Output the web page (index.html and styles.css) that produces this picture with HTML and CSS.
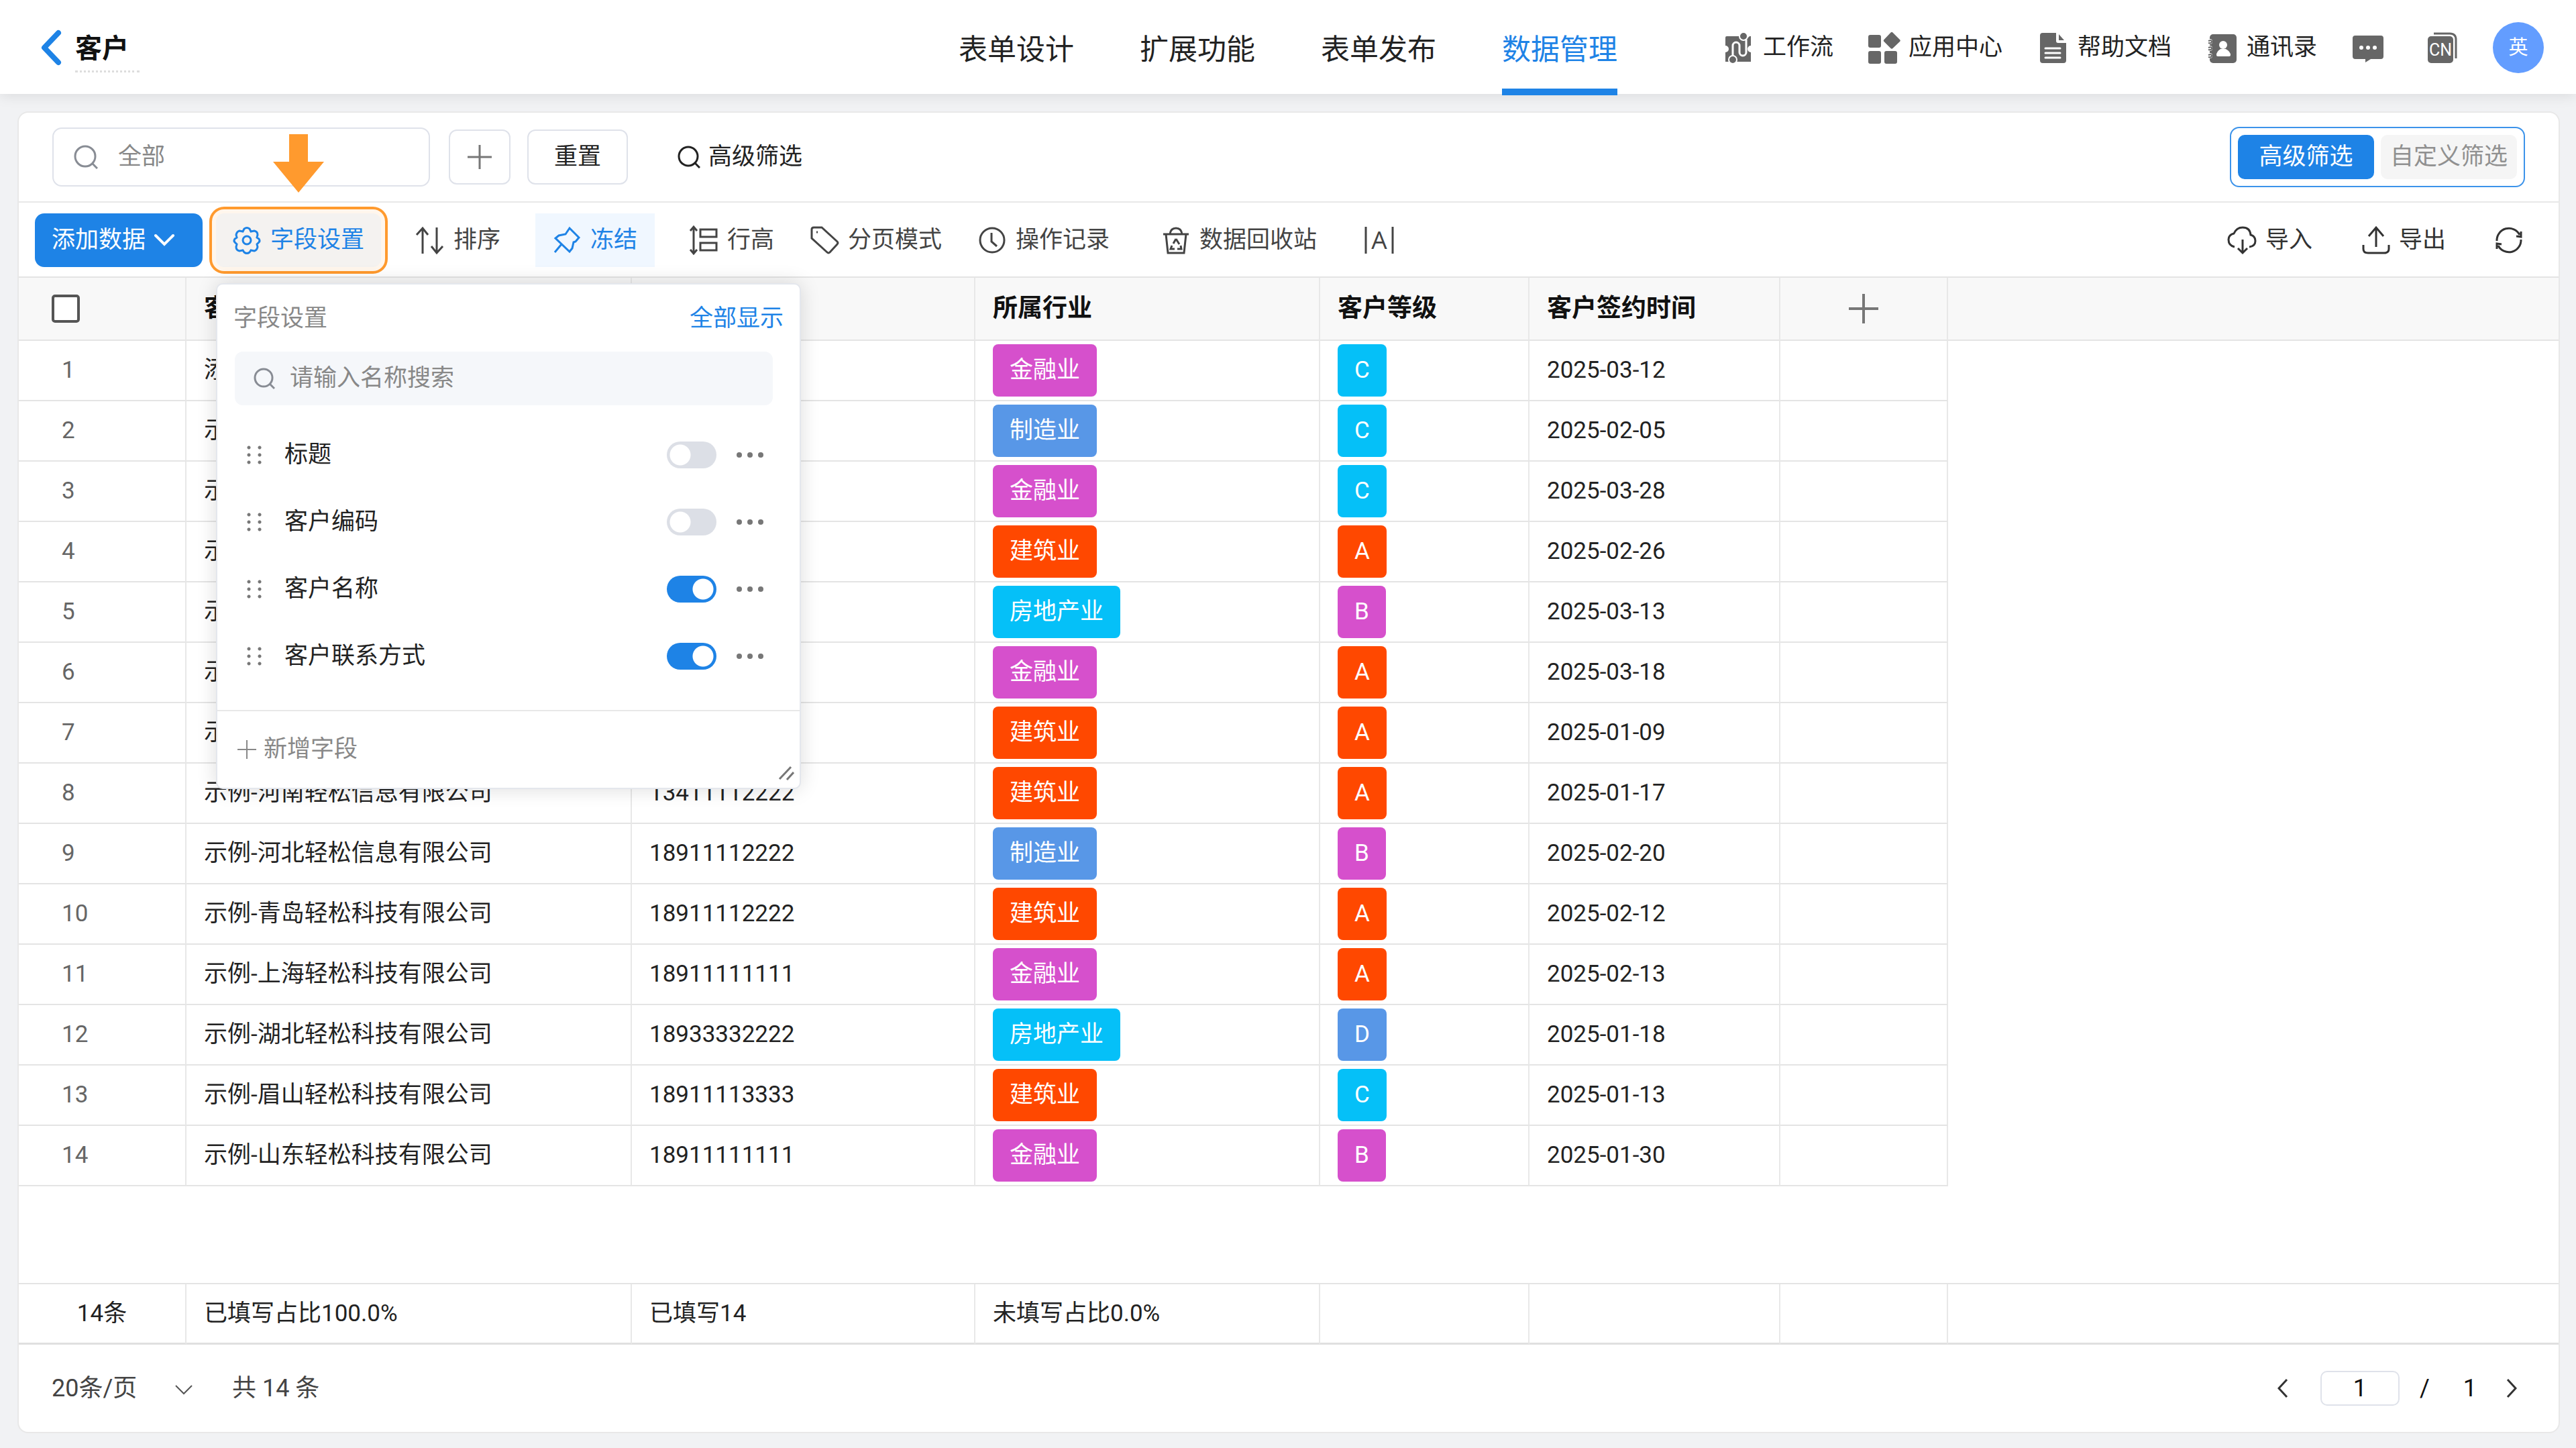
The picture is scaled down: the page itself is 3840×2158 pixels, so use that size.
FILE: index.html
```html
<!DOCTYPE html>
<html lang="zh-CN">
<head>
    <meta charset="UTF-8">
    <meta name="viewport" content="width=device-width, initial-scale=1.0">
    <title>客户</title>
    <link rel="stylesheet" href="styles.css">
</head>
<body>
    <header class="topbar">
        <div class="topbar-left">
            <a class="back" href="#" aria-label="返回">
                <svg width="32" height="56" viewBox="0 0 32 56"><path d="M27 6 6 28l21 22" fill="none" stroke="#1e83e6" stroke-width="8" stroke-linecap="round" stroke-linejoin="round"/></svg>
            </a>
            <h1 class="title">客户</h1>
        </div>
        <nav class="nav">
            <a href="#">表单设计</a>
            <a href="#">扩展功能</a>
            <a href="#">表单发布</a>
            <a href="#" class="active">数据管理</a>
        </nav>
        <div class="topbar-right">
            <a href="#" class="top-link">
                <svg class="top-icon" viewBox="0 0 48 48">
                    <path d="M6 7h24a6 6 0 0 0 10 0h2v14a5 5 0 0 0 0 10v14H20a6 6 0 0 0-9 0H4V31a5 5 0 0 0 0-10V9a2 2 0 0 1 2-2z" fill="#666"/>
                    <path d="M15 38V21a5 5 0 0 1 10 0v10a5 5 0 0 0 10 0V12" fill="none" stroke="#fff" stroke-width="3"/>
                    <circle cx="31" cy="7" r="6" fill="#666" stroke="#fff" stroke-width="2"/>
                    <circle cx="15" cy="42" r="6" fill="#666" stroke="#fff" stroke-width="2"/>
                </svg>
                <span>工作流</span>
            </a>
            <a href="#" class="top-link">
                <svg class="top-icon" viewBox="0 0 48 48" fill="#666">
                    <rect x="0" y="5" width="19" height="19" rx="3"/>
                    <rect x="0" y="29" width="19" height="19" rx="3"/>
                    <rect x="24" y="29" width="19" height="19" rx="3"/>
                    <path d="M33.500 1.500q1.500-1.500 3 0L47 12q1.500 1.500 0 3L36.500 25q-1.500 1.500-3 0L23.500 15q-1.500-1.500 0-3z"/>
                </svg>
                <span>应用中心</span>
            </a>
            <a href="#" class="top-link">
                <svg class="top-icon" viewBox="0 0 48 48">
                    <path d="M8 2h20v12a3 3 0 0 0 3 3h12v26a4 4 0 0 1-4 4H8a4 4 0 0 1-4-4V6a4 4 0 0 1 4-4z" fill="#666"/>
                    <path d="M32 4l8 9h-8z" fill="#666"/>
                    <path d="M12 25h22M12 32h22M12 39h22" stroke="#fff" stroke-width="3" stroke-linecap="round"/>
                </svg>
                <span>帮助文档</span>
            </a>
            <a href="#" class="top-link">
                <svg class="top-icon" viewBox="0 0 48 48">
                    <rect x="5" y="4" width="40" height="43" rx="5" fill="#666"/>
                    <g fill="#fff"><circle cx="5" cy="15" r="4"/><circle cx="5" cy="25" r="4"/><circle cx="5" cy="36" r="4"/></g>
                    <path d="M3 14q5-2 5 1t-5 2M3 24q5-2 5 1t-5 2M3 35q5-2 5 1t-5 2" fill="none" stroke="#666" stroke-width="2"/>
                    <circle cx="25" cy="20" r="6" fill="#fff"/>
                    <path d="M21 26h8q7 4 7 9 0 2-2 2H17q-2 0-2-2 0-5 6-9z" fill="#fff"/>
                </svg>
                <span>通讯录</span>
            </a>
            <button class="icon-btn message-btn" aria-label="消息">
                <svg class="top-icon" viewBox="0 0 48 48">
                    <path d="M5 6h38a4 4 0 0 1 4 4v27a4 4 0 0 1-4 4H28l-8 5v-5H5a4 4 0 0 1-4-4V10a4 4 0 0 1 4-4z" fill="#666"/>
                    <g fill="#fff"><circle cx="14" cy="24" r="3"/><circle cx="24" cy="24" r="3"/><circle cx="34" cy="24" r="3"/></g>
                </svg>
            </button>
            <button class="icon-btn" aria-label="语言">
                <svg class="top-icon" viewBox="0 0 48 48">
                    <path d="M12 3h24q9 0 9 9v28" fill="none" stroke="#666" stroke-width="3"/>
                    <rect x="3" y="7" width="38" height="40" rx="5" fill="#666"/>
                    <text x="22" y="36" font-size="25" text-anchor="middle" fill="#fff" class="lang-code">CN</text>
                </svg>
            </button>
            <button class="avatar">英</button>
        </div>
    </header>

    <main class="panel">
        <div class="filter-bar">
            <label class="search">
                <svg width="36" height="36" viewBox="0 0 36 36" fill="none" stroke="#888c94" stroke-width="3"><circle cx="17" cy="17" r="15"/><path d="M27 27l8 8"/></svg>
                <input type="text" placeholder="全部" aria-label="搜索">
            </label>
            <button class="outline-btn plus-btn" aria-label="添加条件">
                <svg width="36" height="36" viewBox="0 0 36 36" stroke="#777" stroke-width="3"><path d="M18 0v36M0 18h36"/></svg>
            </button>
            <button class="outline-btn reset-btn">重置</button>
            <button class="advanced-btn">
                <svg width="34" height="34" viewBox="0 0 34 34" fill="none" stroke="#222" stroke-width="3"><circle cx="16" cy="16" r="14"/><path d="M25 25l8 8"/></svg>
                高级筛选
            </button>
            <div class="filter-switch">
                <button class="active">高级筛选</button>
                <button>自定义筛选</button>
            </div>
        </div>

        <div class="toolbar">
            <button class="add-btn">
                添加数据
                <svg width="32" height="20" viewBox="0 0 32 20"><path d="M3 3l13 13L29 3" fill="none" stroke="#fff" stroke-width="4" stroke-linecap="round"/></svg>
            </button>
            <div class="field-wrap">
                <button class="tool field-btn">
                    <svg class="tool-icon" viewBox="0 0 42 42">
                        <path d="M17 4q4-3 8 0l2 4 5-1q5 1 5 6l-1 4 3 2q2 3 0 5l-3 3 1 4q-1 5-5 6l-5-1-2 3q-4 3-8 0l-2-3-5 1q-5-1-5-6l1-4-3-3q-2-2 0-5l3-2-1-4q1-5 5-6l5 1z"/>
                        <circle cx="21" cy="21" r="6"/>
                    </svg>
                    字段设置
                </button>
                <svg class="arrow" width="76" height="87" viewBox="0 0 76 87"><path d="M24 0h28v41h24L38 87 0 41h24z" fill="#ff9a2e"/></svg>

                <section class="popup">
                    <div class="popup-head">
                        <span>字段设置</span>
                        <a href="#">全部显示</a>
                    </div>
                    <label class="popup-search">
                        <svg width="32" height="34" viewBox="0 0 32 34" fill="none" stroke="#888c94" stroke-width="3"><circle cx="15" cy="16" r="13"/><path d="M24 25l7 7"/></svg>
                        <input type="text" placeholder="请输入名称搜索" aria-label="名称搜索">
                    </label>
                    <ul class="field-list">
                        <li>
                            <span class="drag"></span>
                            <label for="f1">标题</label>
                            <input class="switch" type="checkbox" id="f1">
                            <button class="more" aria-label="更多"><i></i><i></i><i></i></button>
                        </li>
                        <li>
                            <span class="drag"></span>
                            <label for="f2">客户编码</label>
                            <input class="switch" type="checkbox" id="f2">
                            <button class="more" aria-label="更多"><i></i><i></i><i></i></button>
                        </li>
                        <li>
                            <span class="drag"></span>
                            <label for="f3">客户名称</label>
                            <input class="switch" type="checkbox" id="f3" checked>
                            <button class="more" aria-label="更多"><i></i><i></i><i></i></button>
                        </li>
                        <li>
                            <span class="drag"></span>
                            <label for="f4">客户联系方式</label>
                            <input class="switch" type="checkbox" id="f4" checked>
                            <button class="more" aria-label="更多"><i></i><i></i><i></i></button>
                        </li>
                    </ul>
                    <div class="popup-foot">
                        <button class="new-field">
                            <svg width="28" height="28" viewBox="0 0 28 28" stroke="#888" stroke-width="2"><path d="M14 0v28M0 14h28"/></svg>
                            新增字段
                        </button>
                    </div>
                    <svg class="resize" width="24" height="24" viewBox="0 0 24 24" stroke="#777" stroke-width="3"><path d="M2 21L19 3M13 22l10-11"/></svg>
                </section>
            </div>
            <button class="tool">
                <svg class="tool-icon" viewBox="0 0 42 42"><path d="M10 41V3M1 13l9-10 8 10M31 2v38M23 30l8 10 9-10"/></svg>
                排序
            </button>
            <button class="tool freeze">
                <svg class="tool-icon" viewBox="0 0 42 42"><path d="M25 3l14 14-5 6-3 1-2 9-4 5-21-20 5-4 10-2zM13 27L3 39"/></svg>
                冻结
            </button>
            <div class="tool-group">
                <button class="tool">
                    <svg class="tool-icon" viewBox="0 0 42 42"><path d="M6 1v40M1 7l5-6 5 6M1 35l5 6 5-6M16 5h24v11H16zM16 25h24v11H16z"/></svg>
                    行高
                </button>
                <button class="tool">
                    <svg class="tool-icon" viewBox="0 0 42 42"><path d="M2 5q0-3 3-3h12l23 21q2 2 0 4L29 39q-2 2-4 0L2 18z"/><path d="M9 9h2"/></svg>
                    分页模式
                </button>
                <button class="tool">
                    <svg class="tool-icon" viewBox="0 0 42 42"><circle cx="21" cy="21" r="18"/><path d="M20 10v13l8 7"/></svg>
                    操作记录
                </button>
            </div>
            <div class="tool-group wide">
                <button class="tool">
                    <svg class="tool-icon" viewBox="0 0 42 42"><path d="M2 12h38M6 12l3 28h24l3-28M12 12q1-9 9-9t9 9M21 19l-4 7M21 19l5 8M15 29l-2 5h6M28 29l1 5h-6"/></svg>
                    数据回收站
                </button>
                <button class="tool" aria-label="列宽">
                    <svg class="tool-icon" viewBox="0 0 42 42"><path d="M1 1v40M41 1v40"/><text x="21" y="34" font-size="37" text-anchor="middle" class="letter">A</text></svg>
                </button>
            </div>
            <div class="toolbar-right">
                <button class="plain">
                    <svg class="tool-icon" viewBox="0 0 42 42"><path d="M10 31Q1 29 1 20q0-7 8-9Q13 2 22 2q11 0 12 11 7 2 7 9 0 8-9 9M22 20v20M15 33l7 7 7-7"/></svg>
                    导入
                </button>
                <button class="plain">
                    <svg class="tool-icon" viewBox="0 0 42 42"><path d="M22 31V2M11 15L22 2l11 13M3 28v6q0 6 7 6h24q7 0 7-6v-6"/></svg>
                    导出
                </button>
                <button class="plain" aria-label="刷新">
                    <svg class="tool-icon" viewBox="0 0 42 42"><path d="M3 22a18 18 0 0 1 34-9M32 15l7 1V8M39 20a18 18 0 0 1-34 9M10 27l-7-1v8"/></svg>
                </button>
            </div>
        </div>

        <table class="grid">
            <colgroup>
                <col class="c-num"><col class="c-name"><col class="c-phone"><col class="c-industry"><col class="c-level"><col class="c-date"><col class="c-add"><col>
            </colgroup>
            <thead>
                <tr>
                    <th class="check"><input type="checkbox" aria-label="全选"></th>
                    <th>客户名称</th>
                    <th>客户联系方式</th>
                    <th>所属行业</th>
                    <th>客户等级</th>
                    <th>客户签约时间</th>
                    <th class="add-col"><button aria-label="新增列"><svg width="44" height="44" viewBox="0 0 44 44" stroke="#777" stroke-width="4"><path d="M22 0v44M0 22h44"/></svg></button></th>
                    <th></th>
                </tr>
            </thead>
            <tbody>
                <tr><td>1</td><td>添加轻松科技有限公司</td><td>18911111111</td><td><span class="tag pink">金融业</span></td><td><span class="tag cyan">C</span></td><td>2025-03-12</td><td></td><td></td></tr>
                <tr><td>2</td><td>示例-北京轻松科技有限公司</td><td>18911111111</td><td><span class="tag blue">制造业</span></td><td><span class="tag cyan">C</span></td><td>2025-02-05</td><td></td><td></td></tr>
                <tr><td>3</td><td>示例-天津轻松科技有限公司</td><td>18911111111</td><td><span class="tag pink">金融业</span></td><td><span class="tag cyan">C</span></td><td>2025-03-28</td><td></td><td></td></tr>
                <tr><td>4</td><td>示例-成都轻松科技有限公司</td><td>18911111111</td><td><span class="tag red">建筑业</span></td><td><span class="tag red">A</span></td><td>2025-02-26</td><td></td><td></td></tr>
                <tr><td>5</td><td>示例-重庆轻松科技有限公司</td><td>18911111111</td><td><span class="tag cyan">房地产业</span></td><td><span class="tag pink">B</span></td><td>2025-03-13</td><td></td><td></td></tr>
                <tr><td>6</td><td>示例-广州轻松科技有限公司</td><td>18911111111</td><td><span class="tag pink">金融业</span></td><td><span class="tag red">A</span></td><td>2025-03-18</td><td></td><td></td></tr>
                <tr><td>7</td><td>示例-湖南轻松科技有限公司</td><td>18911111111</td><td><span class="tag red">建筑业</span></td><td><span class="tag red">A</span></td><td>2025-01-09</td><td></td><td></td></tr>
                <tr><td>8</td><td>示例-河南轻松信息有限公司</td><td>13411112222</td><td><span class="tag red">建筑业</span></td><td><span class="tag red">A</span></td><td>2025-01-17</td><td></td><td></td></tr>
                <tr><td>9</td><td>示例-河北轻松信息有限公司</td><td>18911112222</td><td><span class="tag blue">制造业</span></td><td><span class="tag pink">B</span></td><td>2025-02-20</td><td></td><td></td></tr>
                <tr><td>10</td><td>示例-青岛轻松科技有限公司</td><td>18911112222</td><td><span class="tag red">建筑业</span></td><td><span class="tag red">A</span></td><td>2025-02-12</td><td></td><td></td></tr>
                <tr><td>11</td><td>示例-上海轻松科技有限公司</td><td>18911111111</td><td><span class="tag pink">金融业</span></td><td><span class="tag red">A</span></td><td>2025-02-13</td><td></td><td></td></tr>
                <tr><td>12</td><td>示例-湖北轻松科技有限公司</td><td>18933332222</td><td><span class="tag cyan">房地产业</span></td><td><span class="tag blue">D</span></td><td>2025-01-18</td><td></td><td></td></tr>
                <tr><td>13</td><td>示例-眉山轻松科技有限公司</td><td>18911113333</td><td><span class="tag red">建筑业</span></td><td><span class="tag cyan">C</span></td><td>2025-01-13</td><td></td><td></td></tr>
                <tr><td>14</td><td>示例-山东轻松科技有限公司</td><td>18911111111</td><td><span class="tag pink">金融业</span></td><td><span class="tag pink">B</span></td><td>2025-01-30</td><td></td><td></td></tr>
            </tbody>
        </table>

        <table class="grid summary">
            <colgroup>
                <col class="c-num"><col class="c-name"><col class="c-phone"><col class="c-industry"><col class="c-level"><col class="c-date"><col class="c-add"><col>
            </colgroup>
            <tbody>
                <tr><td>14条</td><td>已填写占比100.0%</td><td>已填写14</td><td>未填写占比0.0%</td><td></td><td></td><td></td><td></td></tr>
            </tbody>
        </table>

        <footer class="pager">
            <div class="page-size">
                <select aria-label="每页条数">
                    <option>20条/页</option>
                    <option>50条/页</option>
                    <option>100条/页</option>
                </select>
                <svg width="28" height="16" viewBox="0 0 28 16"><path d="M2 2l12 12L26 2" fill="none" stroke="#555" stroke-width="2"/></svg>
            </div>
            <span class="total">共 14 条</span>
            <div class="page-nav">
                <button aria-label="上一页"><svg width="16" height="30" viewBox="0 0 16 30"><path d="M14 2L2 15l12 13" fill="none" stroke="#333" stroke-width="3"/></svg></button>
                <input type="text" value="1" aria-label="页码">
                <span class="slash">/</span>
                <span class="pages">1</span>
                <button aria-label="下一页"><svg width="16" height="30" viewBox="0 0 16 30"><path d="M2 2l12 13L2 28" fill="none" stroke="#333" stroke-width="3"/></svg></button>
            </div>
        </footer>
    </main>
</body>
</html>
```

FILE: styles.css
```css
* {
    margin: 0;
    padding: 0;
    box-sizing: border-box;
}

body {
    display: flex;
    flex-direction: column;
    min-height: 100vh;
    padding-bottom: 22px;
    background: #f1f2f4;
    color: #222;
    font-family: Roboto, "Noto Sans CJK SC", sans-serif;
    font-size: 35px;
    line-height: 48px;
}

a {
    color: inherit;
    text-decoration: none;
}

button, input, select {
    font: inherit;
    color: inherit;
    background: none;
    border: none;
    outline: none;
}

button {
    cursor: pointer;
    white-space: nowrap;
}

svg {
    display: block;
    flex: none;
}

input::placeholder {
    color: #888;
    opacity: 1;
}

/* top bar */
.topbar {
    display: grid;
    grid-template-columns: 1fr auto 1fr;
    align-items: center;
    height: 140px;
    padding: 0 48px;
    background: #fff;
    box-shadow: 0 2px 20px rgba(0, 0, 0, 0.1);
}

.topbar-left {
    display: flex;
    align-items: center;
    gap: 20px;
    padding-left: 12px;
}

.title {
    width: 96px;
    padding-top: 14px;
    padding-bottom: 8px;
    border-bottom: 3px dotted #ddd;
    font-size: 40px;
    color: #111;
}

.nav {
    display: flex;
    gap: 98px;
    height: 142px;
    font-size: 43px;
    line-height: 148px;
}

.nav a.active {
    color: #1e83e6;
    box-shadow: inset 0 -10px #1e83e6;
}

.topbar-right {
    display: flex;
    align-items: center;
    justify-content: flex-end;
    gap: 52px;
}

.top-link {
    display: flex;
    align-items: center;
    gap: 12px;
    white-space: nowrap;
}

.top-icon {
    width: 48px;
    height: 48px;
}

.message-btn {
    margin-right: 10px;
}

.lang-code {
    font-family: Roboto, sans-serif;
}

.avatar {
    width: 76px;
    height: 76px;
    border-radius: 50%;
    background: #639dff;
    color: #fff;
    font-size: 29px;
}

/* main panel */
.panel {
    flex: 1;
    display: flex;
    flex-direction: column;
    margin: 26px 24px 0 26px;
    background: #fff;
    border: 2px solid #e8e8e8;
    border-radius: 16px;
}

.filter-bar {
    display: flex;
    align-items: center;
    height: 134px;
    padding: 0 50px;
    border-bottom: 2px solid #e8e8e8;
}

.search {
    display: flex;
    align-items: center;
    gap: 30px;
    width: 563px;
    height: 88px;
    margin-right: 28px;
    padding: 0 30px;
    border: 2px solid #dfe2ea;
    border-radius: 14px;
}

.search input {
    flex: 1;
    min-width: 0;
}

.outline-btn {
    display: flex;
    align-items: center;
    justify-content: center;
    height: 82px;
    border: 2px solid #dfe2ea;
    border-radius: 12px;
}

.plus-btn {
    width: 92px;
    margin-right: 25px;
}

.reset-btn {
    width: 150px;
    margin-right: 74px;
}

.advanced-btn {
    display: flex;
    align-items: center;
    gap: 12px;
}

.filter-switch {
    display: flex;
    gap: 10px;
    margin-left: auto;
    padding: 10px;
    border: 2px solid #3c93ea;
    border-radius: 14px;
}

.filter-switch button {
    width: 203px;
    height: 66px;
    border-radius: 10px;
    background: #f5f5f5;
    color: #909090;
}

.filter-switch button.active {
    background: #1e83e6;
    color: #fff;
}

/* toolbar */
.toolbar {
    display: flex;
    align-items: center;
    gap: 26px;
    height: 112px;
    padding: 2px 53px 0 24px;
    border-bottom: 2px solid #e4e4e4;
}

.add-btn {
    display: flex;
    align-items: center;
    justify-content: center;
    gap: 12px;
    width: 250px;
    height: 80px;
    padding-right: 16px;
    border-radius: 14px;
    background: #1e83e6;
    color: #fff;
}

.tool {
    display: flex;
    align-items: center;
    gap: 14px;
    height: 80px;
    padding: 0 26px;
    color: #444;
}

.tool-icon {
    width: 42px;
    height: 42px;
    fill: none;
    stroke: currentColor;
    stroke-width: 3;
    overflow: visible;
}

.letter {
    fill: currentColor;
    stroke: none;
    font-family: "Open Sans", sans-serif;
}

.tool-group {
    display: flex;
    gap: 2px;
}

.tool-group.wide {
    gap: 20px;
}

/* orange frame */
.field-wrap {
    position: relative;
    margin-left: -6px;
    background: #f4f2f0;
    border-radius: 12px;
    box-shadow: 0 0 0 6px #fff6ec, 0 0 0 10px #ff9a2e;
}

.field-btn, .freeze {
    color: #1e83e6;
}

.field-btn {
    padding: 0 25px;
}

.freeze {
    background: #f0f7ff;
}

.arrow {
    position: absolute;
    left: 50%;
    bottom: calc(100% + 31px);
    margin-left: -38px;
}

.toolbar-right {
    display: flex;
    align-items: center;
    gap: 73px;
    margin-left: auto;
}

.plain {
    display: flex;
    align-items: center;
    gap: 14px;
    color: #333;
}

/* field settings popup */
.popup {
    position: absolute;
    top: calc(100% + 24px);
    left: 0;
    z-index: 10;
    width: 872px;
    background: #fff;
    border: 2px solid #e4e7ed;
    border-radius: 10px;
    box-shadow: 0 0 30px rgba(0, 0, 0, 0.14);
}

.popup-head {
    display: flex;
    align-items: center;
    justify-content: space-between;
    height: 100px;
    padding: 2px 24px 0;
    color: #888;
}

.popup-head a {
    color: #1e83e6;
}

.popup-search {
    display: flex;
    align-items: center;
    gap: 22px;
    height: 80px;
    margin: 0 40px 24px 26px;
    padding: 0 28px;
    border-radius: 12px;
    background: #f5f7fa;
}

.popup-search input {
    flex: 1;
    min-width: 0;
}

.field-list {
    padding-bottom: 30px;
    list-style: none;
    border-bottom: 2px solid #e8e8e8;
}

.field-list li {
    display: flex;
    align-items: center;
    height: 100px;
    padding: 0 54px 0 44px;
}

.field-list label {
    flex: 1;
}

.drag {
    width: 32px;
    height: 33px;
    margin-right: 24px;
    background: radial-gradient(circle at 3px 5px, #777 2px, transparent 3px) 0 0 / 16px 11px;
}

.switch {
    appearance: none;
    width: 74px;
    height: 40px;
    margin-right: 30px;
    border-radius: 20px;
    background: radial-gradient(circle at 20px 20px, #fff 15px, transparent 16px) #dcdfe6;
}

.switch:checked {
    background: radial-gradient(circle at 54px 20px, #fff 15px, transparent 16px) #1e83e6;
}

.more {
    display: flex;
    gap: 8px;
}

.more i {
    width: 8px;
    height: 8px;
    border-radius: 50%;
    background: #777;
}

.popup-foot {
    display: flex;
    align-items: center;
    height: 114px;
    padding: 0 30px;
}

.new-field {
    display: flex;
    align-items: center;
    gap: 11px;
    color: #888;
}

.resize {
    position: absolute;
    right: 8px;
    bottom: 10px;
}

/* data grid */
.grid {
    width: 100%;
    table-layout: fixed;
    border-collapse: separate;
    border-spacing: 0;
    text-align: left;
}

.c-num { width: 250px; }
.c-name { width: 664px; }
.c-phone { width: 512px; }
.c-industry { width: 514px; }
.c-level { width: 312px; }
.c-date { width: 374px; }
.c-add { width: 250px; }

.grid th, .grid td {
    padding: 0 26px;
    border-right: 2px solid #e8e8e8;
    border-bottom: 2px solid #e4e4e4;
    white-space: nowrap;
}

.grid th {
    height: 94px;
    background: #f8f8f8;
    color: #111;
    font-size: 37px;
    font-weight: bold;
}

.grid td {
    height: 90px;
}

.grid th:last-child, .grid td:last-child {
    border-right: none;
}

.grid td:last-child {
    border-bottom: none;
}

.grid td:first-child {
    padding-left: 64px;
    color: #666;
}

.grid th.check {
    padding-left: 49px;
}

.check input {
    display: block;
    appearance: none;
    width: 42px;
    height: 42px;
    border: 4px solid #555;
    border-radius: 5px;
    background: #fff;
}

.add-col button {
    display: block;
    margin: 0 auto;
}

.tag {
    display: block;
    width: fit-content;
    height: 78px;
    padding: 0 25px;
    border-radius: 8px;
    color: #fff;
    line-height: 78px;
}

.pink { background: #d650cc; }
.blue { background: #5897e7; }
.cyan { background: #05c0f8; }
.red { background: #ff4800; }

.grid.summary {
    margin-top: auto;
    border-top: 2px solid #e4e4e4;
}

.grid.summary td {
    border-bottom: 3px solid #e0e0e0;
}

.grid.summary td:first-child {
    padding: 0;
    color: #222;
    text-align: center;
}

/* pager */
.pager {
    display: flex;
    align-items: center;
    height: 130px;
    padding: 0 62px 0 49px;
    color: #444;
    font-size: 36px;
}

.page-size {
    position: relative;
    width: 225px;
    margin-right: 44px;
}

.page-size select {
    appearance: none;
    width: 100%;
}

.page-size svg {
    position: absolute;
    top: 18px;
    right: 14px;
    pointer-events: none;
}

.page-nav {
    display: flex;
    align-items: center;
    margin-left: auto;
    color: #111;
}

.page-nav input {
    width: 118px;
    height: 52px;
    margin: 0 30px 0 48px;
    border: 2px solid #dfe2ea;
    border-radius: 10px;
    text-align: center;
}

.slash {
    margin-right: 50px;
}

.pages {
    margin-right: 44px;
}
```
